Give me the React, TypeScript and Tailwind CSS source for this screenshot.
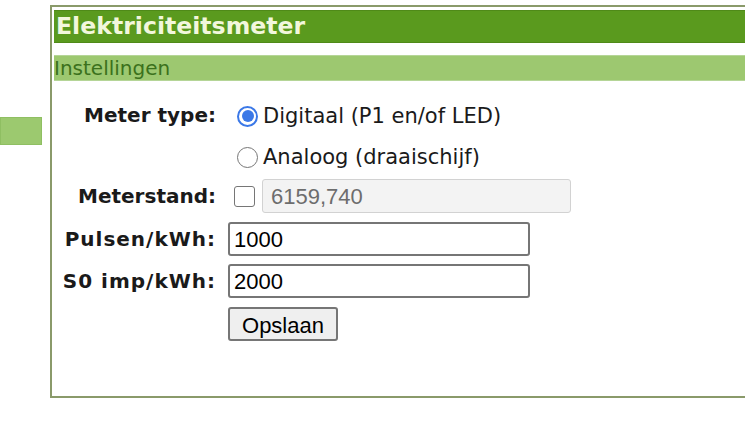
export default function App() {
  const label = "text-right font-bold text-[20px] text-[#1a1a1a] pr-3";
  const verdana = { fontFamily: '"DejaVu Sans", Verdana, sans-serif' };
  const arial = { fontFamily: '"Liberation Sans", Arial, sans-serif' };
  return (
    <div className="w-[745px] h-[435px] bg-white overflow-hidden flex" style={verdana}>
      {/* left menu stub */}
      <div className="w-[50px] shrink-0 pt-[117px]">
        <div className="w-[42px] h-[28px] bg-[#9cc96f] border border-[#8fbf62]" />
      </div>

      {/* panel */}
      <div className="mt-[5px] w-[720px] h-[393px] shrink-0 border-2 border-[#8a9a6a] pt-[3px] pl-[2px]">
        <div className="h-[33px] bg-[#5a9a1e] border-y border-[#4f8a18] flex items-center pl-[2px]">
          <span className="text-[23.6px] font-bold text-[#f2f7dc] leading-none">Elektriciteitsmeter</span>
        </div>
        <div className="mt-[12px] h-[26px] bg-[#9dc870] border-y border-[#b5d597] flex items-center">
          <span className="text-[20px] text-[#3b711c] leading-none">Instellingen</span>
        </div>

        <div className="mt-[17px] grid grid-cols-[174px_1fr]">
          {/* Meter type */}
          <div className={`${label} h-[34px] flex items-center justify-end`}>Meter type:</div>
          <div className="h-[34px] flex items-center pl-[9px] pt-[2px]">
            <span className="w-[21px] h-[21px] rounded-full border-2 border-[#3b78e7] flex items-center justify-center mr-[5px]">
              <span className="w-[12px] h-[12px] rounded-full bg-[#3b78e7]" />
            </span>
            <span className="text-[21px] text-[#1a1a1a] pt-[2px]">Digitaal (P1 en/of LED)</span>
          </div>

          <div className="h-[34px] mt-[7px]" />
          <div className="h-[34px] mt-[7px] flex items-center pl-[9px] pt-[2px]">
            <span className="w-[21px] h-[21px] rounded-full border border-[#767676] mr-[5px]" />
            <span className="text-[21px] text-[#1a1a1a] pt-[2px]">Analoog (draaischijf)</span>
          </div>

          {/* Meterstand */}
          <div className={`${label} h-[34px] mt-[6px] flex items-center justify-end`}>Meterstand:</div>
          <div className="h-[34px] mt-[6px] flex items-center pl-[6px]">
            <span className="w-[21px] h-[21px] rounded-[3px] border border-[#767676] bg-white mr-[7px]" />
            <div
              className="w-[309px] h-[34px] bg-[#f3f3f3] border border-[#d2d2d2] rounded-[3px] flex items-center pl-[8px] text-[22px] text-[#6d6d6d]"
              style={arial}
            >
              6159,740
            </div>
          </div>

          {/* Pulsen */}
          <div className={`${label} tracking-[1px] h-[34px] mt-[9px] flex items-center justify-end`}>Pulsen/kWh:</div>
          <div className="h-[34px] mt-[9px]">
            <div
              className="w-[302px] h-[34px] border-2 border-[#767676] rounded-[3px] flex items-center pl-[4px] text-[22px] text-black"
              style={arial}
            >
              1000
            </div>
          </div>

          {/* S0 */}
          <div className={`${label} tracking-[1px] h-[34px] mt-[8px] flex items-center justify-end`}>S0 imp/kWh:</div>
          <div className="h-[34px] mt-[8px]">
            <div
              className="w-[302px] h-[34px] border-2 border-[#767676] rounded-[3px] flex items-center pl-[4px] text-[22px] text-black"
              style={arial}
            >
              2000
            </div>
          </div>

          <div className="mt-[9px]" />
          <div className="mt-[9px]">
            <button
              className="w-[110px] h-[34px] bg-[#efefef] border-2 border-[#767676] rounded-[3px] text-[22px] text-black"
              style={arial}
            >
              Opslaan
            </button>
          </div>
        </div>
      </div>
    </div>
  );
}
